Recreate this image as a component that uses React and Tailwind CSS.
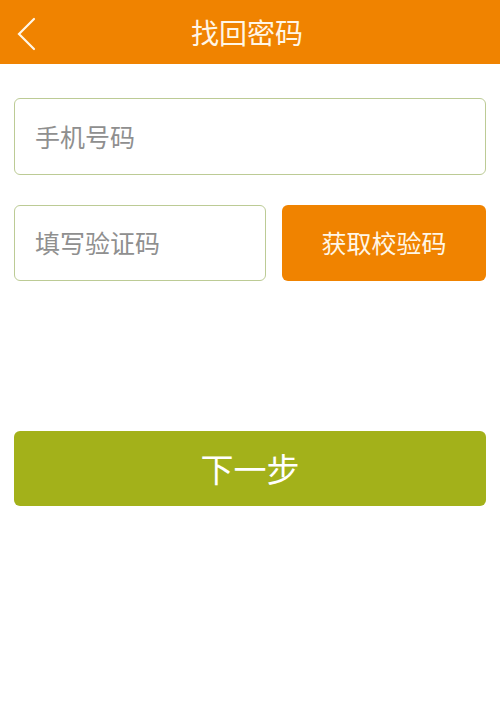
import React from 'react';

const font = { fontFamily: '"Noto Sans CJK SC", "Noto Sans", sans-serif' };

const App = () => {
    return (
        <div className="w-[500px] h-[711px] bg-white" style={font}>
            <div className="relative h-16 bg-[#f08300] flex items-center justify-center">
                <svg
                    className="absolute left-[14px] top-[15px]"
                    width="26"
                    height="38"
                    viewBox="0 0 26 38"
                    fill="none"
                    stroke="#fff6e6"
                    strokeWidth="2.2"
                    strokeLinecap="round"
                    strokeLinejoin="miter"
                >
                    <path d="M20 4 L5 19 L20 34" />
                </svg>
                <h1 className="text-[28px] leading-none text-[#fff6e6] font-normal ml-[-6px]">找回密码</h1>
            </div>

            <div className="px-[14px] pt-[34px] flex flex-col">
                <div className="h-[77px] border border-[#bccb95] rounded-[6px] flex items-center pl-5">
                    <span className="text-[25px] text-[#8f8f8f]">手机号码</span>
                </div>

                <div className="mt-[30px] flex gap-4">
                    <div className="w-[252px] h-[76px] border border-[#bccb95] rounded-[6px] flex items-center pl-5">
                        <span className="text-[25px] text-[#8f8f8f]">填写验证码</span>
                    </div>
                    <button className="flex-1 h-[76px] bg-[#f08300] rounded-[6px] flex items-center justify-center">
                        <span className="text-[25px] text-[#fff6e6]">获取校验码</span>
                    </button>
                </div>

                <button className="mt-[150px] h-[75px] bg-[#a3b11a] rounded-[6px] flex items-center justify-center">
                    <span className="text-[33px] text-white">下一步</span>
                </button>
            </div>
        </div>
    );
};

export default App;
